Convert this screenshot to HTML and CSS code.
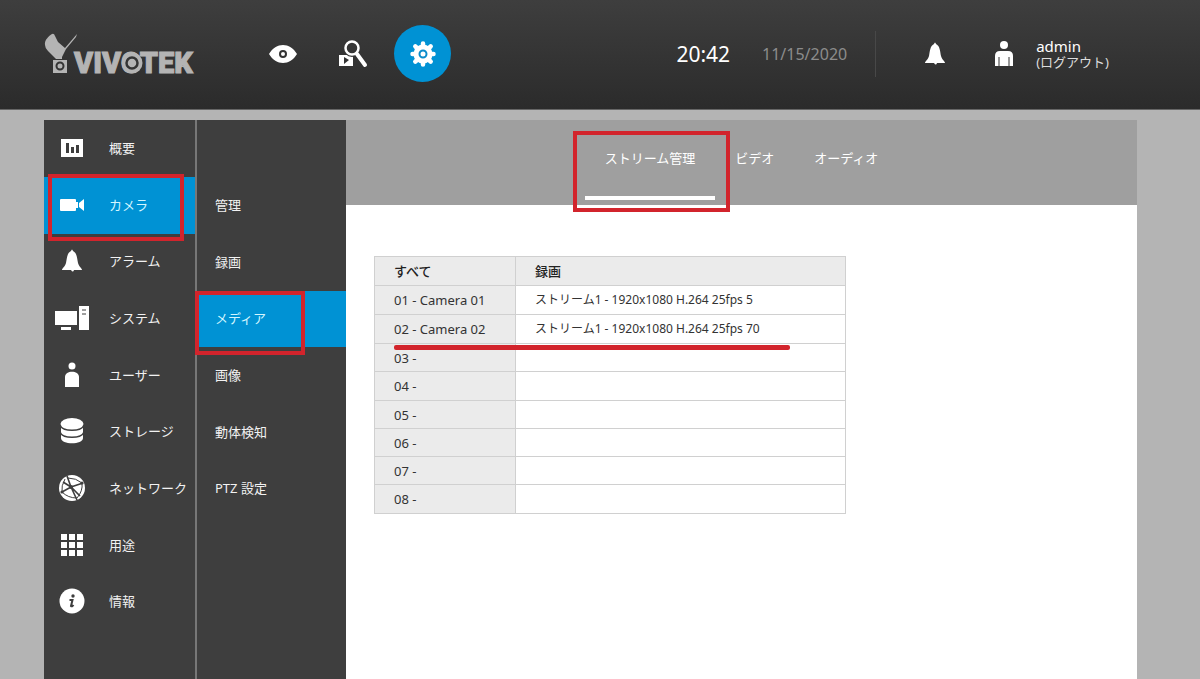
FILE: index.html
```html
<!DOCTYPE html>
<html lang="ja">
<head>
<meta charset="utf-8">
<meta name="viewport" content="width=device-width, initial-scale=1">
<title>VIVOTEK</title>
<link rel="stylesheet" href="styles.css">
</head>
<body>
<header class="topbar">
  <svg class="logo" width="156" height="56" viewBox="0 -6 156 56" role="img" aria-label="VIVOTEK">
    <path fill="#b4b4b4" d="M1 13C0 8 5 4 8 2q2-1 3 2l3 6 7 6L33 2l-1 3-10 12-4 8v2H12L4 19Q1 16 1 13Z"/>
    <path fill="#b4b4b4" d="M9 28h14v13H9z"/>
    <circle cx="16" cy="34" r="3.500" fill="#b4b4b4" stroke="#343434" stroke-width="2"/>
    <text class="wordmark" x="30" y="41">VIVOTEK</text>
    <circle cx="88" cy="31" r="10.500" fill="#b4b4b4"/>
    <circle cx="88" cy="31" r="5.500" fill="#b4b4b4" stroke="#343434" stroke-width="2.500"/>
  </svg>
  <nav class="modes" aria-label="モード">
    <button class="mode" aria-label="ライブ"><svg width="32" height="20" viewBox="0 0 32 20"><path fill="#fff" d="M0 10h2C9-2 23-2 30 10h2-2C23 22 9 22 2 10Z"/><circle cx="16" cy="10" r="3" fill="#fff" stroke="#333" stroke-width="2"/></svg></button>
    <button class="mode" aria-label="検索"><svg width="30" height="28" viewBox="0 0 30 28"><path fill="#fff" d="M1 15h14v11H1z"/><path fill="#333" d="m6 17 5 3-5 4z"/><circle cx="14" cy="8" r="9" fill="#363636"/><path d="m19 14 8 11" stroke="#fff" stroke-width="4" stroke-linecap="round"/><circle cx="14" cy="8" r="6.5" fill="#363636" stroke="#fff" stroke-width="2.5"/></svg></button>
    <button class="mode mode-active" aria-label="設定"><svg width="28" height="28" viewBox="-14 -14 28 28"><g stroke="#fff" stroke-width="4.5" stroke-linecap="round"><path d="M0-10.5v21M-10.5 0h21M-7.7-7.7 7.7 7.7M-7.7 7.7 7.7-7.7"/></g><circle r="9.5" fill="#fff"/><circle r="3.500" fill="#fff" stroke="#0a8ccb" stroke-width="2"/></svg></button>
  </nav>
  <div class="status">
    <time class="clock">20:42</time>
    <time class="date">11/15/2020</time>
    <button class="bell" aria-label="アラーム"><svg width="22" height="24" viewBox="0 0 22 24"><path fill="#fff" d="M10 2q1-3 2 0c4 2 4 7 5 12 1 4 4 5 4 7H13q-1 3-3 0H1c0-2 3-3 4-7 1-5 1-10 5-12Z"/></svg></button>
    <div class="user">
      <svg width="20" height="26" viewBox="0 0 20 26"><circle cx="10" cy="4" r="4" fill="#fff"/><path fill="#fff" d="M1 25V15q0-5 5-5h8q5 0 5 5v10Z"/><path d="M5 16v9M15 16v9" stroke="#333" stroke-width="1"/></svg>
      <div class="account"><span class="name">admin</span><a class="logout" href="#">(ログアウト)</a></div>
    </div>
  </div>
</header>

<main class="shell">
  <nav class="sidebar" aria-label="設定">
    <a class="item" href="#"><span class="glyph"><svg width="22" height="18" viewBox="0 0 22 18"><path fill="#fff" d="M0 0h22v18H0z"/><path fill="#3e3e3e" d="M5 4h3v10H5zM10 8h3v6h-3zM15 6h3v8h-3z"/></svg></span>概要</a>
    <a class="item active" href="#"><span class="glyph"><svg width="24" height="14" viewBox="0 0 24 14"><rect y="1" width="16" height="12" rx="1" fill="#fff"/><path fill="#fff" d="M16 4h2v6h-2zM19 5l5-4v12l-5-4z"/></svg></span>カメラ<span class="mark mark-camera"></span></a>
    <a class="item" href="#"><span class="glyph"><svg width="22" height="24" viewBox="0 0 22 24"><path fill="#fff" d="M10 2q1-3 2 0c4 2 4 7 5 12 1 4 4 5 4 7H13q-1 3-3 0H1c0-2 3-3 4-7 1-5 1-10 5-12Z"/></svg></span>アラーム</a>
    <a class="item" href="#"><span class="glyph"><svg width="34" height="24" viewBox="0 0 34 24"><path fill="#fff" d="M0 5h22v14H0zM6 21h10v3H6zM24 0h10v24H24z"/><path d="M27 4h4M27 8h4" stroke="#3e3e3e"/></svg></span>システム</a>
    <a class="item" href="#"><span class="glyph"><svg width="16" height="26" viewBox="0 0 16 26"><circle cx="8" cy="4" r="3.5" fill="#fff"/><path fill="#fff" d="M1 25V15c0-7 14-7 14 0v10Z"/></svg></span>ユーザー</a>
    <a class="item" href="#"><span class="glyph"><svg width="24" height="28" viewBox="0 0 24 28"><path fill="#fff" d="M1 7v14c0 7 22 7 22 0V7Z"/><ellipse cx="12" cy="7" rx="11.5" ry="6" fill="#fff"/><path d="M0 8c2 7 22 7 24 0M0 15c2 7 22 7 24 0" fill="none" stroke="#3e3e3e" stroke-width="1.5"/></svg></span>ストレージ</a>
    <a class="item" href="#"><span class="glyph"><svg width="26" height="26" viewBox="0 0 26 26"><circle cx="13" cy="13" r="13" fill="#fff"/><g fill="none" stroke="#3e3e3e"><path stroke-width="1.600" d="m8 1 4 11 6 13M3 17l9-5 12-4M4 7l8 5 9 9"/><path stroke-width="1" d="M3 17Q2 11 6 4M3 17q6 6 15 6M23 8q1 8-5 15M9 3q8 0 14 5"/></g><g fill="#3e3e3e"><circle cx="12" cy="12" r="2"/><circle cx="3" cy="17" r="1.600"/><circle cx="23" cy="8" r="1.600"/></g></svg></span>ネットワーク</a>
    <a class="item" href="#"><span class="glyph"><svg width="22" height="22" viewBox="0 0 22 22"><path fill="#fff" d="M0 0h6v6H0zM8 0h6v6H8zM16 0h6v6h-6zM0 8h6v6H0zM8 8h6v6H8zM16 8h6v6h-6zM0 16h6v6H0zM8 16h6v6H8zM16 16h6v6h-6z"/></svg></span>用途</a>
    <a class="item" href="#"><span class="glyph"><svg width="26" height="26" viewBox="0 0 26 26"><circle cx="13" cy="13" r="12.5" fill="#fff"/><circle cx="14" cy="8" r="1.7" fill="#3e3e3e"/><path d="M10.500 12h3L12 18q1 1 2.500-1" fill="none" stroke="#3e3e3e" stroke-width="2"/></svg></span>情報</a>
  </nav>

  <nav class="subnav" aria-label="カメラ">
    <a class="item" href="#">管理</a>
    <a class="item" href="#">録画</a>
    <a class="item active" href="#">メディア<span class="mark mark-media"></span></a>
    <a class="item" href="#">画像</a>
    <a class="item" href="#">動体検知</a>
    <a class="item" href="#">PTZ 設定</a>
  </nav>

  <section class="panel">
    <nav class="tabs" aria-label="メディア">
      <a class="tab tab-active" href="#">ストリーム管理<span class="mark mark-tab"></span></a>
      <a class="tab" href="#">ビデオ</a>
      <a class="tab" href="#">オーディオ</a>
    </nav>
    <div class="content">
      <table class="streams">
        <thead>
          <tr><th scope="col">すべて</th><th scope="col">録画</th></tr>
        </thead>
        <tbody>
          <tr class="filled"><th scope="row">01 - Camera 01</th><td>ストリーム1 - 1920x1080 H.264 25fps 5</td></tr>
          <tr class="filled"><th scope="row">02 - Camera 02<span class="strike"></span></th><td>ストリーム1 - 1920x1080 H.264 25fps 70</td></tr>
          <tr><th scope="row">03 -</th><td></td></tr>
          <tr><th scope="row">04 -</th><td></td></tr>
          <tr><th scope="row">05 -</th><td></td></tr>
          <tr><th scope="row">06 -</th><td></td></tr>
          <tr><th scope="row">07 -</th><td></td></tr>
          <tr><th scope="row">08 -</th><td></td></tr>
        </tbody>
      </table>
    </div>
  </section>
</main>
</body>
</html>
```
FILE: styles.css
```css
* { box-sizing: border-box; }

body {
  display: flex;
  flex-direction: column;
  min-height: 100vh;
  margin: 0;
  background: #b4b4b4;
  color: #333;
  font: 13px/20px "Noto Sans", "Noto Sans CJK JP", sans-serif;
}

a { color: inherit; text-decoration: none; }
svg { display: block; flex: none; }
button { padding: 0; border: 0; background: none; cursor: pointer; }

/* Header */
.topbar {
  display: flex;
  align-items: center;
  height: 110px;
  padding: 0 91px 2px 44px;
  border-bottom: 1px solid #666;
  background: linear-gradient(#3e3e3e, #2b2b2b);
  color: #fff;
}
.wordmark { fill: #b4b4b4; stroke: #b4b4b4; stroke-width: 1px; font: 900 29px Roboto, sans-serif; }
.modes { display: flex; align-items: center; margin-left: 48px; }
.mode { display: grid; place-items: center; width: 70px; height: 57px; }
.mode-active { width: 57px; margin-left: 6px; border-radius: 50%; background: #0092d4; }
.status { display: flex; align-items: center; margin-left: auto; }
.clock { font-size: 21px; }
.date { margin-left: 32px; color: #8c8c8c; font-size: 16px; }
.bell { display: grid; align-items: center; height: 46px; margin-left: 28px; padding-left: 48px; border-left: 1px solid #484848; }
.user { display: flex; align-items: center; gap: 22px; margin-left: 48px; }
.account { display: flex; flex-direction: column; font-size: 15px; line-height: 16px; }
.logout { color: #ddd; font-size: 13px; }

/* Page body */
.shell { display: flex; flex: 1; margin: 10px 63px 0 44px; }
.sidebar, .subnav { flex: none; background: #3e3e3e; color: #f2f2f2; }
.sidebar { width: 153px; border-right: 2px solid #777; }
.subnav { width: 149px; padding-top: 57px; }
.item { position: relative; display: flex; align-items: center; height: 57px; padding-bottom: 2px; }
.item:nth-child(3n) { height: 56px; }
.glyph { display: grid; place-items: center; width: 56px; margin-right: 9px; }
.subnav .item { padding-left: 18px; }
.active { background: #0092d4; color: #d4f6ff; }

.panel { flex: 1; min-width: 0; background: #fff; }
.tabs { display: flex; justify-content: center; height: 85px; background: #9f9f9f; color: #fff; }
.tab { position: relative; height: 80px; padding: 28px 20px 0; white-space: nowrap; }
.tab-active { border-bottom: 4px solid #fff; }
.content { padding: 51px 28px; }

/* Stream table */
.streams { width: 472px; max-width: 100%; border-collapse: collapse; table-layout: fixed; }
.streams th, .streams td { height: 28px; padding: 0 19px; border: 1px solid #d0d0d0; text-align: left; }
.streams th { position: relative; background: #ebebeb; font-weight: 400; }
.streams thead th { height: 29px; color: #222; font-weight: 500; }
.streams thead th:first-child { width: 141px; }
.streams td { font-size: 12px; }
.streams .filled th, .streams .filled td,
.streams tr:nth-child(4n) th { height: 29px; }

/* Red highlight marks */
.mark { position: absolute; z-index: 1; border: 4px solid #d2242c; pointer-events: none; }
.mark-camera { top: -3px; left: 4px; width: 136px; height: 67px; }
.mark-media { top: 0; left: -2px; width: 110px; height: 64px; }
.mark-tab { top: 11px; left: -12px; width: 157px; height: 81px; }
.strike { position: absolute; z-index: 1; bottom: -7px; left: 19px; width: 396px; height: 5px; border-radius: 2px; background: #d2242c; }
```
